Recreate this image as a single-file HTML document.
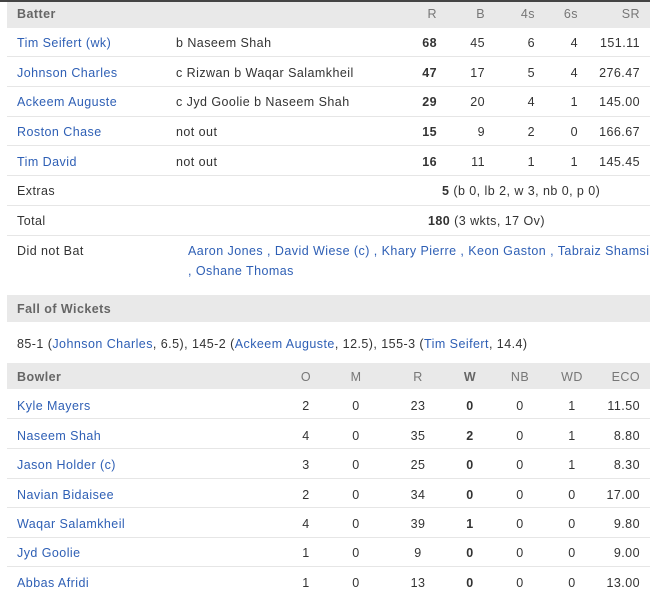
<!DOCTYPE html>
<html><head><meta charset="utf-8"><style>
*{margin:0;padding:0;box-sizing:border-box}
body{width:650px;height:605px;background:#fff;font-family:"Liberation Sans",Arial,sans-serif;font-size:12.5px;letter-spacing:0.45px;color:#333;position:relative;overflow:hidden}
.top{position:absolute;left:0;top:0;width:650px;height:2px;background:#444}
.h{position:absolute;left:7px;width:643px;background:#e9e9e9;color:#666}
.r{position:absolute;left:7px;width:643px;border-bottom:1px solid #e6e6e6}
.t{position:absolute;white-space:nowrap}
.a{color:#2e5fb5}
.b{font-weight:bold}
.rt{text-align:right}
.c{text-align:center}
</style></head><body>
<div class="top"></div>
<div class="h" style="top:2px;height:26px"></div>
<div class="t b" style="left:17px;top:7px;color:#666">Batter</div>
<div class="t rt" style="right:213px;top:7px;color:#777">R</div>
<div class="t rt" style="right:165px;top:7px;color:#777">B</div>
<div class="t rt" style="right:115px;top:7px;color:#777">4s</div>
<div class="t rt" style="right:72px;top:7px;color:#777">6s</div>
<div class="t rt" style="right:10px;top:7px;color:#777">SR</div>

<div class="r" style="top:28px;height:29px"></div>
<div class="t a" style="left:17px;top:36px">Tim Seifert (wk)</div><div class="t" style="left:176px;top:36px">b Naseem Shah</div>
<div class="t b" style="right:213px;top:36px">68</div><div class="t" style="right:165px;top:36px">45</div><div class="t" style="right:115px;top:36px">6</div><div class="t" style="right:72px;top:36px">4</div><div class="t" style="right:10px;top:36px">151.11</div>

<div class="r" style="top:57px;height:30px"></div>
<div class="t a" style="left:17px;top:66px">Johnson Charles</div><div class="t" style="left:176px;top:66px">c Rizwan b Waqar Salamkheil</div>
<div class="t b" style="right:213px;top:66px">47</div><div class="t" style="right:165px;top:66px">17</div><div class="t" style="right:115px;top:66px">5</div><div class="t" style="right:72px;top:66px">4</div><div class="t" style="right:10px;top:66px">276.47</div>

<div class="r" style="top:87px;height:30px"></div>
<div class="t a" style="left:17px;top:95px">Ackeem Auguste</div><div class="t" style="left:176px;top:95px">c Jyd Goolie b Naseem Shah</div>
<div class="t b" style="right:213px;top:95px">29</div><div class="t" style="right:165px;top:95px">20</div><div class="t" style="right:115px;top:95px">4</div><div class="t" style="right:72px;top:95px">1</div><div class="t" style="right:10px;top:95px">145.00</div>

<div class="r" style="top:117px;height:29px"></div>
<div class="t a" style="left:17px;top:125px">Roston Chase</div><div class="t" style="left:176px;top:125px">not out</div>
<div class="t b" style="right:213px;top:125px">15</div><div class="t" style="right:165px;top:125px">9</div><div class="t" style="right:115px;top:125px">2</div><div class="t" style="right:72px;top:125px">0</div><div class="t" style="right:10px;top:125px">166.67</div>

<div class="r" style="top:146px;height:30px"></div>
<div class="t a" style="left:17px;top:155px">Tim David</div><div class="t" style="left:176px;top:155px">not out</div>
<div class="t b" style="right:213px;top:155px">16</div><div class="t" style="right:165px;top:155px">11</div><div class="t" style="right:115px;top:155px">1</div><div class="t" style="right:72px;top:155px">1</div><div class="t" style="right:10px;top:155px">145.45</div>

<div class="r" style="top:176px;height:30px"></div>
<div class="t" style="left:17px;top:184px">Extras</div>
<div class="t" style="left:442px;top:184px"><span class="b">5</span> (b 0, lb 2, w 3, nb 0, p 0)</div>

<div class="r" style="top:206px;height:30px"></div>
<div class="t" style="left:17px;top:214px">Total</div>
<div class="t" style="left:428px;top:214px"><span class="b">180</span> (3 wkts, 17 Ov)</div>

<div class="t" style="left:17px;top:244px">Did not Bat</div>
<div class="t a" style="left:188px;top:244px">Aaron Jones , David Wiese (c) , Khary Pierre , Keon Gaston , Tabraiz Shamsi</div>
<div class="t a" style="left:188px;top:264px">, Oshane Thomas</div>

<div class="h" style="top:295px;height:27px"></div>
<div class="t b" style="left:17px;top:302px;color:#666">Fall of Wickets</div>
<div class="t" style="left:17px;top:337px">85-1 (<span class="a">Johnson Charles</span>, 6.5), 145-2 (<span class="a">Ackeem Auguste</span>, 12.5), 155-3 (<span class="a">Tim Seifert</span>, 14.4)</div>

<div class="h" style="top:363px;height:26px"></div>
<div class="t b" style="left:17px;top:370px;color:#666">Bowler</div>
<div class="t c" style="left:286px;width:40px;top:370px;color:#777">O</div>
<div class="t c" style="left:336px;width:40px;top:370px;color:#777">M</div>
<div class="t c" style="left:398px;width:40px;top:370px;color:#777">R</div>
<div class="t c b" style="left:450px;width:40px;top:370px;color:#666">W</div>
<div class="t c" style="left:500px;width:40px;top:370px;color:#777">NB</div>
<div class="t c" style="left:552px;width:40px;top:370px;color:#777">WD</div>
<div class="t rt" style="right:10px;top:370px;color:#777">ECO</div>

<div class="r" style="top:389px;height:30px"></div>
<div class="t a" style="left:17px;top:399px">Kyle Mayers</div>
<div class="t c" style="left:286px;width:40px;top:399px">2</div><div class="t c" style="left:336px;width:40px;top:399px">0</div><div class="t c" style="left:398px;width:40px;top:399px">23</div><div class="t c b" style="left:450px;width:40px;top:399px">0</div><div class="t c" style="left:500px;width:40px;top:399px">0</div><div class="t c" style="left:552px;width:40px;top:399px">1</div><div class="t" style="right:10px;top:399px">11.50</div>

<div class="r" style="top:419px;height:30px"></div>
<div class="t a" style="left:17px;top:429px">Naseem Shah</div>
<div class="t c" style="left:286px;width:40px;top:429px">4</div><div class="t c" style="left:336px;width:40px;top:429px">0</div><div class="t c" style="left:398px;width:40px;top:429px">35</div><div class="t c b" style="left:450px;width:40px;top:429px">2</div><div class="t c" style="left:500px;width:40px;top:429px">0</div><div class="t c" style="left:552px;width:40px;top:429px">1</div><div class="t" style="right:10px;top:429px">8.80</div>

<div class="r" style="top:449px;height:30px"></div>
<div class="t a" style="left:17px;top:458px">Jason Holder (c)</div>
<div class="t c" style="left:286px;width:40px;top:458px">3</div><div class="t c" style="left:336px;width:40px;top:458px">0</div><div class="t c" style="left:398px;width:40px;top:458px">25</div><div class="t c b" style="left:450px;width:40px;top:458px">0</div><div class="t c" style="left:500px;width:40px;top:458px">0</div><div class="t c" style="left:552px;width:40px;top:458px">1</div><div class="t" style="right:10px;top:458px">8.30</div>

<div class="r" style="top:479px;height:29px"></div>
<div class="t a" style="left:17px;top:488px">Navian Bidaisee</div>
<div class="t c" style="left:286px;width:40px;top:488px">2</div><div class="t c" style="left:336px;width:40px;top:488px">0</div><div class="t c" style="left:398px;width:40px;top:488px">34</div><div class="t c b" style="left:450px;width:40px;top:488px">0</div><div class="t c" style="left:500px;width:40px;top:488px">0</div><div class="t c" style="left:552px;width:40px;top:488px">0</div><div class="t" style="right:10px;top:488px">17.00</div>

<div class="r" style="top:508px;height:30px"></div>
<div class="t a" style="left:17px;top:517px">Waqar Salamkheil</div>
<div class="t c" style="left:286px;width:40px;top:517px">4</div><div class="t c" style="left:336px;width:40px;top:517px">0</div><div class="t c" style="left:398px;width:40px;top:517px">39</div><div class="t c b" style="left:450px;width:40px;top:517px">1</div><div class="t c" style="left:500px;width:40px;top:517px">0</div><div class="t c" style="left:552px;width:40px;top:517px">0</div><div class="t" style="right:10px;top:517px">9.80</div>

<div class="r" style="top:538px;height:29px"></div>
<div class="t a" style="left:17px;top:546px">Jyd Goolie</div>
<div class="t c" style="left:286px;width:40px;top:546px">1</div><div class="t c" style="left:336px;width:40px;top:546px">0</div><div class="t c" style="left:398px;width:40px;top:546px">9</div><div class="t c b" style="left:450px;width:40px;top:546px">0</div><div class="t c" style="left:500px;width:40px;top:546px">0</div><div class="t c" style="left:552px;width:40px;top:546px">0</div><div class="t" style="right:10px;top:546px">9.00</div>

<div class="t a" style="left:17px;top:576px">Abbas Afridi</div>
<div class="t c" style="left:286px;width:40px;top:576px">1</div><div class="t c" style="left:336px;width:40px;top:576px">0</div><div class="t c" style="left:398px;width:40px;top:576px">13</div><div class="t c b" style="left:450px;width:40px;top:576px">0</div><div class="t c" style="left:500px;width:40px;top:576px">0</div><div class="t c" style="left:552px;width:40px;top:576px">0</div><div class="t" style="right:10px;top:576px">13.00</div>
</body></html>
